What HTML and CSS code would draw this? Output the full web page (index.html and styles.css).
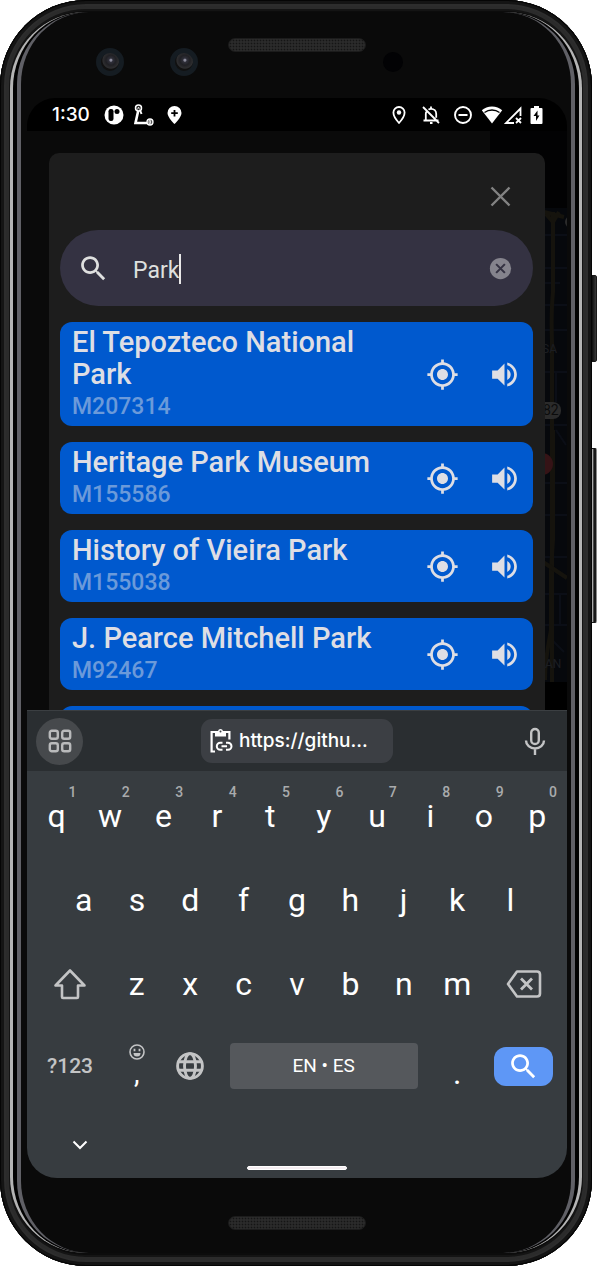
FILE: index.html
```html
<!DOCTYPE html>
<html lang="en">
<head>
<meta charset="utf-8">
<meta name="viewport" content="width=device-width, initial-scale=1">
<title>Park search</title>
<link rel="stylesheet" href="styles.css">
</head>
<body>
<svg class="sprite" aria-hidden="true">
  <symbol id="search" viewBox="0 0 24 24"><path d="M15.5 14h-.79l-.28-.27C15.41 12.59 16 11.11 16 9.5 16 5.91 13.09 3 9.5 3S3 5.91 3 9.5 5.91 16 9.5 16c1.61 0 3.09-.59 4.23-1.57l.27.28v.79l5 4.99L20.49 19l-4.99-5zm-6 0C7.01 14 5 11.99 5 9.5S7.01 5 9.5 5 14 7.01 14 9.5 11.99 14 9.5 14z"/></symbol>
  <symbol id="locate" viewBox="0 0 24 24"><path d="M12 8c-2.21 0-4 1.79-4 4s1.79 4 4 4 4-1.79 4-4-1.79-4-4-4zm8.94 3c-.46-4.17-3.77-7.48-7.94-7.94V1h-2v2.06C6.83 3.52 3.52 6.83 3.06 11H1v2h2.06c.46 4.17 3.77 7.48 7.94 7.94V23h2v-2.06c4.17-.46 7.48-3.77 7.94-7.94H23v-2h-2.06zM12 19c-3.87 0-7-3.13-7-7s3.13-7 7-7 7 3.13 7 7-3.13 7-7 7z"/></symbol>
  <symbol id="sound" viewBox="0 0 24 24"><path d="M3 9v6h4l5 5V4L7 9H3zm13.5 3c0-1.77-1.02-3.29-2.5-4.03v8.05c1.48-.73 2.5-2.25 2.5-4.02zM14 3.23v2.06c2.89.86 5 3.54 5 6.71s-2.11 5.85-5 6.71v2.06c4.01-.91 7-4.49 7-8.77s-2.99-7.86-7-8.77z"/></symbol>
</svg>

<div class="device">
  <span class="side-button power"></span>
  <span class="side-button volume"></span>
  <div class="shell"><div class="rim"><div class="face">

    <div class="bezel bezel-top">
      <div class="cameras"><span class="camera"></span><span class="camera"></span></div>
      <span class="grille"></span>
      <span class="sensor"></span>
    </div>

    <main class="screen">
      <header class="status">
        <time class="clock">1:30</time>
        <svg width="20" height="20" viewBox="0 0 20 20"><circle cx="10" cy="10" r="9.5" fill="#fff"/><rect x="4.5" y="4" width="5" height="12" rx="2.2"/><circle cx="13" cy="6.5" r="2.5"/></svg>
        <svg class="route" width="22" height="22" viewBox="0 0 22 22" fill="none" stroke="#fff"><path d="M5.500 5.500 2.500 19H15" stroke-width="2.600"/><path d="M7 6 8.500 10" stroke-width="2"/><circle cx="5.500" cy="4" r="3" stroke-width="1.500" fill="#222"/><path d="M4.500 5.500 5.500 3l1 2.500" stroke-width=".8"/><circle cx="17" cy="18" r="3" stroke-width="1.300" fill="#555"/><path d="M16 16.500h1.500v3H16zM16 18h2" stroke-width=".7"/></svg>
        <svg class="pin" width="15" height="18" viewBox="0 0 15 18"><path fill="#fff" d="M7.500 0A7 7 0 0 0 .5 7c0 4.500 7 11 7 11s7-6.500 7-11a7 7 0 0 0-7-7z"/><path d="M7.500 4v6.500M4.200 7.200h6.600" stroke="#000" stroke-width="1.800"/></svg>
        <span class="spacer"></span>
        <svg width="16" height="20" viewBox="0 0 16 20"><path fill="none" stroke="#fff" stroke-width="1.800" d="M8 2a5.600 5.600 0 0 0-5.600 5.600C2.400 12 8 18 8 18s5.600-6 5.600-10.400A5.600 5.600 0 0 0 8 2z"/><circle cx="8" cy="7.500" r="2.200" fill="#fff"/></svg>
        <svg class="bell" width="20" height="20" viewBox="0 0 20 20" fill="none" stroke="#fff" stroke-width="1.800"><path d="M2.500 15.500h15M4.800 15.500V9c0-1 .3-2 .8-2.700M7.500 4.600C8.200 4 9 3.800 10 3.800c3 0 5.200 2 5.200 5v4M2 2l16 16M9 18h2.500M10 1.500v2"/></svg>
        <svg class="dnd" width="20" height="20" viewBox="0 0 20 20" fill="none" stroke="#fff" stroke-width="1.900"><circle cx="10" cy="10" r="8"/><path d="M5.500 10h9"/></svg>
        <svg class="wifi" width="22" height="20" viewBox="0 0 22 20"><path fill="#fff" d="M11 1.500C7 1.500 3.500 3 .8 5.200L11 18.500 21.200 5.200C18.500 3 15 1.500 11 1.500z"/><path fill="none" stroke="#000" stroke-width="1.300" d="M3.500 7.500C5.500 6 8 5 11 5s5.500 1 7.500 2.500"/></svg>
        <svg width="20" height="20" viewBox="0 0 20 20" fill="none" stroke="#fff" stroke-width="1.800"><path d="M11 18H3L17.500 3.500V11"/><path d="m13 13 5 5m0-5-5 5"/></svg>
        <svg class="battery" width="13" height="20" viewBox="0 0 13 20"><path fill="#fff" d="M4 1h5v2h2.500q1 0 1 1v14q0 1-1 1h-10q-1 0-1-1V4q0-1 1-1H4z"/><path d="m7.500 5.500-4 5.500H6v5l3.500-5.500h-2z"/></svg>
      </header>

      <section class="app">
        <svg class="map" width="77" height="579" viewBox="490 131 77 579" aria-hidden="true">
          <rect x="490" y="131" width="77" height="579" fill="#020203"/>
          <rect x="490" y="208" width="77" height="474" fill="#06080c"/>
          <g fill="none" stroke="#0b0e16" stroke-width="2"><path d="M540 235h27M540 268h27M540 283h20M540 305h27M540 330h27M540 372h27M556 372v30M540 425h27M540 483h27M540 515h27M540 557h27M556 430l10 15M540 594h27M560 594v30M540 625h27M552 640l12 12"/></g>
          <g fill="none" stroke="#15130d" stroke-width="4"><path d="M553 212v80q-2 20-1 50v368M540 211l12 3 12 3M546 214l7 8 6-10M553 430v110l-2 30v60q-6 30-6 50"/><path d="m540 560 27 18"/></g>
          <circle cx="542" cy="464" r="11" fill="#351316"/>
          <rect x="536" y="402" width="25" height="17" rx="8" fill="#2b2b2b"/>
          <circle cx="571" cy="222" r="6" fill="#2b2b2b"/>
          <text class="map-route" x="543" y="415">82</text>
          <text class="map-place" x="542" y="353">SA</text>
          <text class="map-place" x="545" y="668">AN</text>
          <path d="M490 682h77v28h-77z" fill="#000"/>
        </svg>

        <div class="panel">
          <div class="panel-head">
            <button class="icon-button" aria-label="Close"><svg width="33" height="33" viewBox="0 0 33 33"><path d="m7.500 7.500 18 18m0-18-18 18" stroke="#828282" stroke-width="2.400"/></svg></button>
          </div>
          <div class="searchbar">
            <label for="query" aria-label="Search"><svg class="icon"><use href="#search"/></svg></label>
            <div class="query"><input id="query" type="text" value="Park" autocomplete="off"><span class="caret"></span></div>
            <button class="icon-button" aria-label="Clear"><svg width="25" height="25" viewBox="0 0 24 24"><circle cx="12" cy="12" r="10.200" fill="#85848d"/><path d="m7.800 7.800 8.400 8.400m0-8.400-8.400 8.400" stroke="#343242" stroke-width="2"/></svg></button>
          </div>
          <ul class="results">
            <li class="card"><div class="info"><h2>El Tepozteco National Park</h2><p>M207314</p></div><button class="icon-button" aria-label="Locate"><svg class="icon"><use href="#locate"/></svg></button><button class="icon-button" aria-label="Listen"><svg class="icon"><use href="#sound"/></svg></button></li>
            <li class="card"><div class="info"><h2>Heritage Park Museum</h2><p>M155586</p></div><button class="icon-button" aria-label="Locate"><svg class="icon"><use href="#locate"/></svg></button><button class="icon-button" aria-label="Listen"><svg class="icon"><use href="#sound"/></svg></button></li>
            <li class="card"><div class="info"><h2>History of Vieira Park</h2><p>M155038</p></div><button class="icon-button" aria-label="Locate"><svg class="icon"><use href="#locate"/></svg></button><button class="icon-button" aria-label="Listen"><svg class="icon"><use href="#sound"/></svg></button></li>
            <li class="card"><div class="info"><h2>J. Pearce Mitchell Park</h2><p>M92467</p></div><button class="icon-button" aria-label="Locate"><svg class="icon"><use href="#locate"/></svg></button><button class="icon-button" aria-label="Listen"><svg class="icon"><use href="#sound"/></svg></button></li>
            <li class="card card-empty"></li>
          </ul>
        </div>
      </section>

      <section class="keyboard" aria-label="Keyboard">
        <div class="toolbar">
          <button class="apps" aria-label="Tools"><svg width="24" height="24" viewBox="0 0 24 24" fill="none" stroke="#b9babb" stroke-width="2.400"><rect x="1.800" y="1.800" width="8" height="8" rx="2"/><rect x="14.200" y="1.800" width="8" height="8" rx="2"/><rect x="1.800" y="14.200" width="8" height="8" rx="2"/><rect x="14.200" y="14.200" width="8" height="8" rx="2"/></svg></button>
          <button class="chip"><svg width="24" height="26" viewBox="0 0 24 26" fill="none" stroke="#fff" stroke-width="2.200"><path d="M6 4H2.600v19.500H6M17 4h3.400v7.500"/><path d="M6 3h3a2.600 2.600 0 0 1 5 0h3v5.500H6z" fill="#fff" stroke="none"/><circle cx="11.500" cy="3.500" r="1" fill="#3c3f44" stroke="none"/><path d="M13.500 14.800h-2.200a3.500 3.500 0 0 0 0 7h2.200M17 14.800h2a3.500 3.500 0 0 1 0 7h-2M12.500 18.300h5.500" stroke-width="2"/></svg><span>https://githu...</span></button>
          <button class="icon-button mic" aria-label="Voice input"><svg width="24" height="28" viewBox="0 0 24 28" fill="none" stroke="#c3c4c5" stroke-width="2.400"><rect x="8.200" y="2" width="7.600" height="15" rx="3.800"/><path d="M3 13.500a9 8 0 0 0 18 0M12 21.500V28"/></svg></button>
        </div>
        <div class="keys">
          <div class="row"><button class="key">q<sup>1</sup></button><button class="key">w<sup>2</sup></button><button class="key">e<sup>3</sup></button><button class="key">r<sup>4</sup></button><button class="key">t<sup>5</sup></button><button class="key">y<sup>6</sup></button><button class="key">u<sup>7</sup></button><button class="key">i<sup>8</sup></button><button class="key">o<sup>9</sup></button><button class="key">p<sup>0</sup></button></div>
          <div class="row row-home"><button class="key">a</button><button class="key">s</button><button class="key">d</button><button class="key">f</button><button class="key">g</button><button class="key">h</button><button class="key">j</button><button class="key">k</button><button class="key">l</button></div>
          <div class="row">
            <button class="key wide" aria-label="Shift"><svg width="34" height="32" viewBox="0 0 34 32" fill="none" stroke="#c3c4c5" stroke-width="2.600" stroke-linejoin="round"><path d="M17 2.500 2.500 17.500H9V29q0 1 1 1h14q1 0 1-1V17.500h6.500z"/></svg></button>
            <button class="key">z</button><button class="key">x</button><button class="key">c</button><button class="key">v</button><button class="key">b</button><button class="key">n</button><button class="key">m</button>
            <button class="key wide" aria-label="Backspace"><svg width="36" height="28" viewBox="0 0 36 28" fill="none" stroke="#c3c4c5" stroke-width="2.600" stroke-linejoin="round"><path d="M11 1.500h20q3 0 3 3v19q0 3-3 3H11L2 14z"/><path d="m15 8.500 11 11m0-11-11 11" stroke-width="2.800"/></svg></button>
          </div>
          <div class="row row-bottom">
            <button class="key wide symbols">?123</button>
            <button class="key comma" aria-label="Comma"><svg width="16" height="16" viewBox="0 0 16 16" fill="none" stroke="#c3c4c5"><circle cx="8" cy="8" r="7" stroke-width="1.600"/><path d="M4.500 9h7a3.500 3.500 0 0 1-7 0z" fill="#c3c4c5" stroke="none"/><path d="M5.500 4.800v2.400M10.500 4.800v2.400" stroke-width="1.800"/></svg><span>,</span></button>
            <button class="key" aria-label="Language"><svg width="28" height="28" viewBox="0 0 28 28" fill="none" stroke="#c3c4c5" stroke-width="2.900"><circle cx="14" cy="14" r="12.400"/><ellipse cx="14" cy="14" rx="5.500" ry="12.400"/><path d="M2.500 9.800h23M2.500 18.200h23"/></svg></button>
            <button class="key space">EN • ES</button>
            <button class="key period">.</button>
            <button class="key wide go" aria-label="Search"><span><svg class="icon"><use href="#search"/></svg></span></button>
          </div>
        </div>
        <footer class="nav">
          <button class="icon-button hide" aria-label="Hide keyboard"><svg width="16" height="10" viewBox="0 0 16 10"><path d="m1.500 1.500 6.500 6.500 6.500-6.500" fill="none" stroke="#fff" stroke-width="2"/></svg></button>
          <span class="home"></span>
        </footer>
      </section>
    </main>

    <div class="bezel bezel-bottom"><span class="grille"></span></div>
  </div></div></div>
</div>
</body>
</html>
```
FILE: styles.css
```css
* { box-sizing: border-box; }
body { margin: 0; background: #fff; font-family: Roboto, sans-serif; color: #dedee4; }
h2, p, ul { margin: 0; padding: 0; }
button { padding: 0; border: 0; background: none; color: inherit; font: inherit; }
svg { display: block; flex: none; }
.sprite { position: absolute; width: 0; height: 0; }
.icon { width: 33px; height: 33px; fill: currentColor; }
.icon-button { display: flex; flex: none; }

.device { position: relative; height: 100vh; min-height: 900px; padding-right: 5px; }
.side-button { position: absolute; right: 0; width: 8px; border-radius: 2px; background: linear-gradient(to right, #111 40%, #3a3a3a); border: 1px solid #1a1a1a; }
.power { top: 21.7%; height: 6.9%; }
.volume { top: 35.4%; height: 13.8%; border-right-color: #8a8a8a; background: linear-gradient(to right, #aaa 45%, #181818 65%); }

.shell { position: relative; height: 100%; padding: 12px 10px 13px; border-radius: 86px; background: #0c0c0c; box-shadow: inset 0 0 0 1px #050505, inset 0 0 0 4px #141414, inset 0 0 0 6px #2d2d2d, inset 0 0 0 9px #2b2b2b, inset 0 0 0 11px #141414; }
.rim { height: 100%; padding: 0 4px; border: solid #b4b4b4; border-width: 0 3px; border-radius: 76px; background: #020202; }
.face { display: flex; flex-direction: column; height: 100%; padding: 0 4px 0 6px; border: solid #606066; border-width: 0 4px; border-radius: 72px; background: #0a0a0a; }

.bezel { display: grid; grid-template-columns: 1fr 138px 1fr; flex: none; align-items: start; }
.bezel-top { height: 86px; padding-top: 26px; }
.bezel-bottom { height: 75px; padding-top: 38px; }
.bezel-bottom .grille { grid-column: 2; }
.grille { height: 14px; border-radius: 7px; border: 1px solid #1c1c1c; background: radial-gradient(circle, #151515 0, #343434 2px) 0 0 / 3px 3px; }
.cameras { display: flex; justify-content: flex-end; gap: 46px; padding: 10px 30px 0 0; }
.camera { width: 28px; height: 28px; border: 5px solid #151c22; border-radius: 50%; background: radial-gradient(circle at 55% 40%, #8a8a9a 1px, #30303a 2px, #202024 5px, #2e2e30 8px, #111 9px); }
.sensor { width: 20px; height: 20px; margin: 14px 0 0 17px; border-radius: 50%; background: #020204; }

.screen { display: flex; flex-direction: column; flex: 1; min-height: 0; overflow: hidden; border-radius: 28px 28px 30px 30px; }
.status { display: flex; flex: none; align-items: center; height: 33px; padding: 0 24px 0 25px; background: #000; }
.clock { margin-right: 14px; color: #fff; font: 500 19px/20px Inter, sans-serif; }
.route { margin-left: 9px; }
.pin { margin-left: 12px; }
.spacer { flex: 1; }
.bell { margin-left: 14px; }
.dnd { margin-left: 12px; }
.wifi { margin-left: 8px; }
.battery { margin-left: 7px; }

.app { position: relative; flex: 1; min-height: 0; overflow: hidden; padding: 22px 22px 0; background: #0a0a0a; }
.map { position: absolute; top: 0; right: 0; }
.map-route { font: 14px Roboto, sans-serif; fill: #0b0b0b; }
.map-place { font: 12px Roboto, sans-serif; fill: #1c1e22; }
.panel { position: relative; height: 100%; padding: 0 12px 0 11px; border-radius: 10px 10px 0 0; background: #1d1d1d; }
.panel-head { display: flex; justify-content: flex-end; height: 77px; padding: 27px 16px 0 0; }
.searchbar { display: flex; align-items: center; height: 76px; padding: 0 20px 0 17px; border-radius: 38px; background: #343242; color: #dfe0df; }
.query { display: flex; flex: 1; align-items: center; min-width: 0; padding: 2px 0 0 23px; }
.query input { field-sizing: content; min-width: 0; padding: 3px 0 0; border: 0; outline: 0; background: none; color: inherit; font: 23px/30px Roboto, sans-serif; }
.caret { width: 2px; height: 30px; background: #e8e8e8; }
.results { display: flex; flex-direction: column; gap: 16px; padding-top: 16px; list-style: none; }
.card { display: flex; align-items: center; gap: 29px; padding: 4px 12px 3px; border-radius: 12px; background: #0059ce; }
.card-empty { height: 72px; }
.info { flex: 1; }
.info h2 { font-size: 29px; font-weight: 500; line-height: 32px; }
.info p { color: #6b9ada; font-size: 23px; font-weight: 500; line-height: 33px; }

.keyboard { flex: none; background: #373c40; color: #fff; }
.toolbar { display: grid; grid-template-columns: 1fr 192px 1fr; align-items: center; height: 61px; padding: 0 9px; border-top: 1px solid #3b3f42; background: #2a2e31; }
.apps { display: grid; place-items: center; width: 47px; height: 47px; border-radius: 50%; background: #46494c; }
.chip { display: flex; align-items: center; gap: 6px; height: 44px; padding-left: 8px; border-radius: 11px; background: #3c3f44; font: 500 19px/24px Inter, sans-serif; }
.mic { justify-self: end; margin-right: 11px; }
.keys { padding: 3px 3px 0; }
.row { display: grid; grid-template-columns: repeat(20, 1fr); height: 84px; }
.row-home { padding: 0 27px; grid-template-columns: repeat(18, 1fr); }
.row-bottom { height: 80px; }
.key { position: relative; grid-column: span 2; display: grid; place-items: center; font-size: 32px; line-height: 38px; }
.key sup { position: absolute; top: 10px; right: 7px; color: #a9abad; font-size: 14px; font-weight: 500; line-height: 16px; }
.wide { grid-column: span 3; }
.symbols { color: #c3c4c5; font-size: 21px; font-weight: 500; }
.comma { align-content: center; justify-items: center; font-size: 28px; line-height: 28px; }
.space { grid-column: span 8; align-self: center; height: 46px; margin: 0 13px; border-radius: 4px; background: #55585c; font-size: 19px; }
.period { padding-top: 14px; }
.go span { display: grid; place-items: center; width: 59px; height: 39px; border-radius: 12px; background: #5e97f6; }
.nav { display: flex; flex-direction: column; justify-content: space-between; height: 72px; padding: 34px 0 8px; }
.hide { margin-left: 45px; align-self: flex-start; }
.home { width: 100px; height: 4px; border: 1px solid #fff; border-radius: 2px; background: #f5eef2; align-self: center; }
```
